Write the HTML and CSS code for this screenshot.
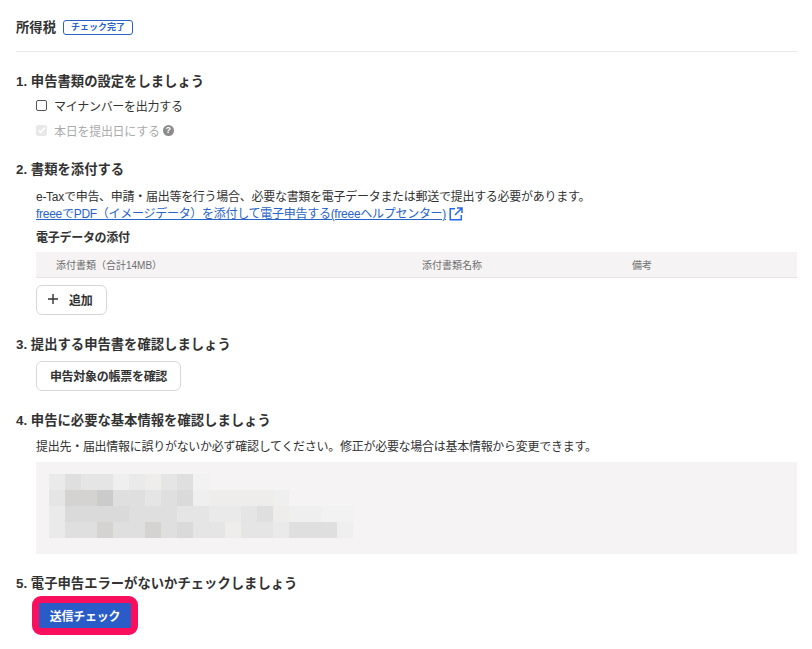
FILE: index.html
```html
<!DOCTYPE html>
<html lang="ja">
<head>
<meta charset="utf-8">
<title>所得税</title>
<link rel="stylesheet" href="styles.css">
</head>
<body>
<main class="page">
  <header class="head">
    <h1 class="title">所得税</h1>
    <span class="badge">チェック完了</span>
  </header>

  <section class="sec sec-1">
    <h2 class="sec-title">1. 申告書類の設定をしましょう</h2>
    <div class="indent">
      <label class="check"><span class="box"></span>マイナンバーを出力する</label>
      <label class="check check-off">
        <span class="box box-off"><svg viewBox="0 0 10 10" width="10" height="10"><path d="M1.5 5.2 4 7.6 8.6 2.4" fill="none" stroke="#fff" stroke-width="1.6"/></svg></span>本日を提出日にする
        <span class="help">?</span>
      </label>
    </div>
  </section>

  <section class="sec sec-2">
    <h2 class="sec-title">2. 書類を添付する</h2>
    <div class="indent">
      <p class="text">e-Taxで申告、申請・届出等を行う場合、必要な書類を電子データまたは郵送で提出する必要があります。</p>
      <p class="text"><a class="link" href="#">freeeでPDF（イメージデータ）を添付して電子申告する(freeeヘルプセンター)</a><svg class="ext" viewBox="0 0 14 14" width="14" height="14"><path d="M6 1.7H1.2v11.1h11.1V8M8 1H13V6M13 1 6 8" fill="none" stroke="#2864f0" stroke-width="1.5"/></svg></p>
      <h3 class="sub">電子データの添付</h3>
      <div class="thead">
        <span class="th th-a">添付書類（合計14MB）</span>
        <span class="th th-b">添付書類名称</span>
        <span class="th">備考</span>
      </div>
      <button class="btn btn-add"><svg viewBox="0 0 12 12" width="12" height="12"><path d="M6 1V11M1 6H11" fill="none" stroke="#323232" stroke-width="1.4"/></svg>追加</button>
    </div>
  </section>

  <section class="sec sec-3">
    <h2 class="sec-title">3. 提出する申告書を確認しましょう</h2>
    <div class="indent">
      <button class="btn btn-form">申告対象の帳票を確認</button>
    </div>
  </section>

  <section class="sec sec-4">
    <h2 class="sec-title">4. 申告に必要な基本情報を確認しましょう</h2>
    <div class="indent">
      <p class="text">提出先・届出情報に誤りがないか必ず確認してください。修正が必要な場合は基本情報から変更できます。</p>
      <div class="panel">
        <div class="mosaic">
          <i class="c3"></i><i class="c5"></i><i class="c4"></i><i class="c4"></i><i class="c1"></i><i class="c3"></i><i class="c2"></i><i class="c4"></i><i class="c5"></i><i class="c0"></i><i></i><i></i><i></i><i></i><i></i><i></i><i></i><i></i><i></i>
          <i class="c4"></i><i class="c7"></i><i class="c7"></i><i class="c8"></i><i class="c5"></i><i class="c5"></i><i class="c4"></i><i class="c5"></i><i class="c6"></i><i class="c1"></i><i class="c2"></i><i class="c2"></i><i class="c2"></i><i class="c2"></i><i class="c1"></i><i></i><i></i><i></i><i></i>
          <i class="c3"></i><i class="c6"></i><i class="c6"></i><i class="c6"></i><i class="c6"></i><i class="c5"></i><i class="c5"></i><i class="c5"></i><i class="c4"></i><i class="c4"></i><i class="c3"></i><i class="c3"></i><i class="c4"></i><i class="c5"></i><i class="c2"></i><i class="c1"></i><i class="c1"></i><i class="c0"></i><i class="c0"></i>
          <i class="c3"></i><i class="c5"></i><i class="c5"></i><i class="c7"></i><i class="c5"></i><i class="c5"></i><i class="c7"></i><i class="c5"></i><i class="c6"></i><i class="c4"></i><i class="c4"></i><i class="c2"></i><i class="c4"></i><i class="c4"></i><i class="c3"></i><i class="c5"></i><i class="c5"></i><i class="c5"></i><i class="c1"></i>
        </div>
      </div>
    </div>
  </section>

  <section class="sec sec-5">
    <h2 class="sec-title">5. 電子申告エラーがないかチェックしましょう</h2>
    <div class="indent">
      <button class="send">送信チェック</button>
    </div>
  </section>
</main>
</body>
</html>
```
FILE: styles.css
```css
* { box-sizing: border-box; }
html, body { margin: 0; padding: 0; background: #fff; }
body {
  font-family: "Liberation Sans", "Noto Sans CJK JP", sans-serif;
  color: #323232;
  font-size: 12px;
  overflow: hidden;
}
.page { width: 797px; height: 649px; padding: 16px 0 0 16px; }
.head {
  display: flex;
  align-items: center;
  gap: 7px;
  height: 36px;
  padding-bottom: 12px;
  border-bottom: 1px solid #e8e8e8;
}
.title { margin: 0; font-size: 13.33px; font-weight: 700; line-height: 24px; }
.badge {
  display: block;
  width: 70px;
  height: 15px;
  border: 1px solid #2864c8;
  border-radius: 3px;
  color: #2864c8;
  font-size: 9px;
  font-weight: 700;
  line-height: 13px;
  text-align: center;
}
.sec-title { margin: 0; font-size: 13.33px; font-weight: 700; line-height: 20px; }
.indent { padding-left: 20px; }
.sec-1 { margin-top: 20px; }
.sec-2 { margin-top: 18px; }
.sec-3 { margin-top: 20px; }
.sec-4 { margin-top: 20px; }
.sec-5 { margin-top: 20px; }
.check { display: flex; align-items: center; height: 24px; margin-top: 1px; font-size: 12px; letter-spacing: -0.28px; }
.check + .check { margin-top: 1px; }
.check-off { color: #aaa; }
.box {
  display: flex;
  align-items: center;
  justify-content: center;
  width: 11px;
  height: 11px;
  margin-right: 7px;
  border: 1px solid #555;
  border-radius: 2px;
  background: #fff;
}
.box-off { border-color: #e8e8e8; background: #e8e8e8; }
.help {
  display: block;
  width: 11px;
  height: 11px;
  margin-left: 3px;
  border-radius: 50%;
  background: #8c8c8c;
  color: #fff;
  font-size: 9px;
  font-weight: 700;
  line-height: 11px;
  text-align: center;
}
.text { margin: 0; font-size: 12px; line-height: 17px; letter-spacing: -0.28px; }
.sec-2 .indent > .text:first-child { margin-top: 9px; }
.link { color: #2864c8; text-decoration: underline; }
.ext { margin-left: 3px; vertical-align: -3px; }
.sub { margin: 6px 0 0; font-size: 12px; font-weight: 700; line-height: 18px; letter-spacing: -0.28px; }
.thead {
  display: flex;
  align-items: center;
  height: 26px;
  margin-top: 5px;
  padding-left: 20px;
  background: #f5f3f4;
  border-bottom: 1px solid #e5e3e4;
}
.th { font-size: 10px; color: #6e6e6e; padding-bottom: 1px; }
.th-a { width: 366px; }
.th-b { width: 210px; }
.btn {
  display: flex;
  align-items: center;
  border: 1px solid #d7d7d7;
  border-radius: 6px;
  background: #fff;
  color: #323232;
  font-family: inherit;
  font-size: 12px;
  font-weight: 700;
  padding: 0 0 2px;
  letter-spacing: -0.28px;
}
.btn-add { width: 71px; height: 30px; margin-top: 7px; padding-left: 10px; gap: 10px; }
.btn-form { justify-content: center; width: 145px; height: 30px; margin-top: 6px; }
.sec-4 .text { margin-top: 8px; }
.panel { height: 92px; margin-top: 6px; padding: 12px 0 0 13px; background: #f5f3f4; }
.mosaic { display: grid; grid-template-columns: repeat(19, 16px); grid-auto-rows: 16px; }
.c0 { background: #f3f2f2; }
.c1 { background: #f0efef; }
.c2 { background: #eeedec; }
.c3 { background: #ebeaea; }
.c4 { background: #e6e5e5; }
.c5 { background: #e0dfdf; }
.c6 { background: #dbdada; }
.c7 { background: #d4d3d2; }
.c8 { background: #cccbcb; }
.send {
  display: block;
  width: 106px;
  height: 39px;
  margin: 2px 0 0 -4px;
  border: 7px solid #fa0f5f;
  border-radius: 9px;
  background: #2a5cc8;
  color: #fff;
  font-family: inherit;
  font-size: 12px;
  font-weight: 700;
  padding: 0;
  letter-spacing: -0.28px;
}
```
